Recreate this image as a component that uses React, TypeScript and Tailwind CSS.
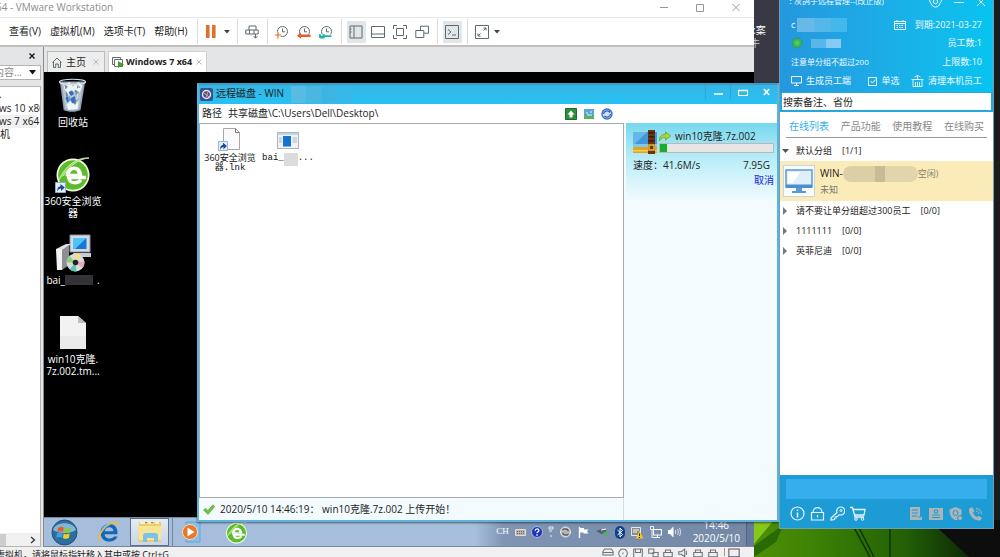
import type { ReactNode } from "react";

type Kids = { children: ReactNode };

function Svg({ w, h, box, label, children }: Kids & { w: number; h: number; box: string; label?: string }) {
  return (
    <svg width={w} height={h} viewBox={box} fill="none" className="shrink-0" aria-hidden={label ? undefined : true} aria-label={label}>
      {children}
    </svg>
  );
}

/* ---------- toolbar glyphs ---------- */

function Sep() {
  return (
    <span className="flex w-2 shrink-0 justify-center">
      <span className="h-[25px] w-px bg-[#dcdcdc]" />
    </span>
  );
}

function Caret() {
  return (
    <Svg w={6} h={4} box="0 0 6 4">
      <path d="M0 0h6L3 3.5z" fill="#444" />
    </Svg>
  );
}

function ToolButton({ label, active, children }: Kids & { label: string; active?: boolean }) {
  return (
    <button aria-label={label} className="flex w-[22px] shrink-0 items-center justify-center">
      <span className={active ? "flex h-[22px] w-[19px] items-center justify-center bg-[#e3e6e8]" : "flex items-center justify-center"}>
        {children}
      </span>
    </button>
  );
}

function Clock({ children }: { children?: ReactNode }) {
  return (
    <Svg w={14} h={14} box="0 0 14 14">
      <circle cx="7.5" cy="6.5" r="5" stroke="#5d6a70" />
      <path d="M7.5 3.5v3.3h2.6" stroke="#5d6a70" />
      {children}
    </Svg>
  );
}

function Toolbar() {
  return (
    <div className="flex items-center">
      <Sep />
      <button aria-label="暂停" className="flex w-5 justify-center">
        <Svg w={10} h={13} box="0 0 10 13">
          <path d="M0 0h3.6v13H0zM6 0h3.6v13H6z" fill="#e2702c" />
        </Svg>
      </button>
      <button aria-label="电源选项" className="flex w-3 justify-center"><Caret /></button>
      <Sep />
      <ToolButton label="发送 Ctrl+Alt+Del">
        <Svg w={14} h={14} box="0 0 14 14">
          <path d="M4 5V1h7v4M.8 5h12.4v4H.8zM4.500 5v4M9 5v4M10.500 9v4M8.500 11l2 2.200 2-2.200" stroke="#5d6a70" />
        </Svg>
      </ToolButton>
      <Sep />
      <ToolButton label="拍摄快照">
        <Clock>
          <path d="M0 10h6M3 7v6.500" stroke="#fff" strokeWidth="3" />
          <path d="M0 10h6M3 7v6.500" stroke="#e2702c" strokeWidth="1.200" />
        </Clock>
      </ToolButton>
      <ToolButton label="恢复快照">
        <Clock>
          <path d="M0 9.500h14V14H0z" fill="#fff" />
          <path d="M0 10.700 4 7.600v1.800h9.500v2.600H4v1.800z" fill="#e2602c" />
        </Clock>
      </ToolButton>
      <ToolButton label="管理快照">
        <Clock>
          <path d="M0 9.500h14V14H0z" fill="#fff" />
          <path d="M0 9.200h2.200v1.500h1.600V9.200h1.500l.8 1h6.400v1.900H6.100l-.9 1.400H1.400L0 12.400z" fill="#18b5a8" />
        </Clock>
      </ToolButton>
      <Sep />
      <ToolButton label="显示库" active>
        <Svg w={14} h={14} box="0 0 14 14"><path d="M1 1h12v12H1zM5 1v12M1 4h1.500M1 7h1.500" stroke="#5d6a70" /></Svg>
      </ToolButton>
      <ToolButton label="缩略图栏">
        <Svg w={14} h={14} box="0 0 14 14"><path d="M.5 1.500h13v11H.5zM.5 9h13" stroke="#5d6a70" /></Svg>
      </ToolButton>
      <ToolButton label="全屏">
        <Svg w={14} h={14} box="0 0 14 14"><path d="M4 .5H.5V4M10 .5h3.500V4M4 13.500H.5V10M10 13.500h3.500V10M3.500 3.500h7v7h-7z" stroke="#5d6a70" /></Svg>
      </ToolButton>
      <ToolButton label="Unity">
        <Svg w={14} h={14} box="0 0 14 14"><path d="M.8 5.500h8v7h-8zM5.500 5.500V1.200h8v7H8.800" stroke="#5d6a70" /></Svg>
      </ToolButton>
      <Sep />
      <ToolButton label="控制台视图" active>
        <Svg w={14} h={14} box="0 0 14 14"><path d="M.5.5h13v13H.5zM3 4.500l3 2.500-3 2.500M7 10h4" stroke="#5d6a70" /></Svg>
      </ToolButton>
      <Sep />
      <ToolButton label="拉伸客户机">
        <Svg w={14} h={14} box="0 0 14 14"><path d="M.5.5h13v13H.5zM8.500 5.500 11 3M8.500 3H11v2.500M5.500 8.500 3 11M3 8.500V11h2.500" stroke="#5d6a70" /></Svg>
      </ToolButton>
      <button aria-label="拉伸选项" className="flex w-2 justify-center"><Caret /></button>
    </div>
  );
}

/* ---------- shared pictures ---------- */

function GreenE({ size }: { size: number }) {
  return (
    <Svg w={size} h={size} box="0 0 36 36">
      <circle cx="18" cy="19" r="16.500" fill="#f4ffe8" />
      <circle cx="18" cy="19" r="14.800" fill="#5cba2b" />
      <path d="M31 21.500H13.500c.8 3.600 3.200 5.200 6.200 5.200 2.600 0 4.600-.9 6.300-2.700" stroke="#fff" strokeWidth="3.400" />
      <path d="M10.500 20c.4-6 3.800-9.500 8.600-9.500S27 13.800 27.400 20z" fill="#fff" />
      <path d="M15.200 17.800c.5-2.400 1.900-3.700 3.800-3.700s3.200 1.300 3.600 3.700z" fill="#5cba2b" />
      <path d="M4 24C10 10 22 1 34 2c-10 1-19 7-26 18" fill="#8fd94d" stroke="#e9ffd6" strokeWidth=".8" />
    </Svg>
  );
}

function ShortcutBadge({ size }: { size: number }) {
  return (
    <Svg w={size} h={size} box="0 0 11 11">
      <path d="M.5.500h10v10H.5z" fill="#e4edf9" stroke="#93abc9" />
      <path d="M2.500 9.500c-.5-3.500 1-5 3-5.200V2L9.800 5.400 6 9V6.600C4.500 6.600 3.300 7.500 2.500 9.500z" fill="#1a4a94" />
    </Svg>
  );
}

function RecycleBin() {
  return (
    <Svg w={30} h={36} box="0 0 32 36">
      <path d="M2 3.500 6 34c4 2.600 14 2.600 18 0l5-30.500z" fill="#8fa4b5" />
      <path d="M4 5l3.500 28c4 2 11 2 15 0L27 5z" fill="#b4c4d0" />
      <path d="M6 8l6-4 4 5 6-5 4 4-3 8-5-3-6 5-4-3zM9 28l5-4 4 5 4-6-1 10-10 1z" fill="#eef3f6" />
      <path d="M8 13l3 5-2 4zM18 12l5 3-4 3zM22 22l-3 6-4-2zM7 7l4 2-3 3zM21 7l3 3-4 1z" fill="#71899b" />
      <path d="M11 15l4-2 2 4-3 2zM8 21l4-2 1 5-3 2zM13 22l5-3 1 5-4 3z" fill="#2f6fc4" />
      <ellipse cx="15.500" cy="4" rx="14" ry="2.800" stroke="#d5e0e8" strokeWidth="1.200" />
      <path d="M10 8l3 25M22 8l-3 25" stroke="#fff" strokeOpacity=".5" />
    </Svg>
  );
}

function Installer() {
  return (
    <Svg w={36} h={38} box="0 0 36 38">
      <path d="M15 1h20v17H15z" fill="#d7d9e4" stroke="#8c8fa5" />
      <path d="M18 4h13.500v11H18z" fill="#1378d4" />
      <path d="M18 4h13.500L20 15h-2z" fill="#4fc3f5" />
      <path d="M18 19h18v4H20z" fill="#c7c9d3" />
      <path d="M1 15l10-5h5l-7 6z" fill="#dfe0e3" />
      <path d="M1 15h6v21H2z" fill="#f1f1f1" />
      <path d="M7 16l7-5v20l-7 5z" fill="#8d8f96" />
      <circle cx="20.500" cy="28.500" r="9" fill="#d8dcd8" />
      <path d="M20.500 28.500V19.500a9 9 0 0 1 6 2.300z" fill="#f3e27c" />
      <path d="M20.500 28.500l9-1a9 9 0 0 1-2 6.500z" fill="#e7a6b9" />
      <path d="M20.500 28.500l1 9a9 9 0 0 1-7-2z" fill="#58c7b4" />
      <path d="M20.500 28.500l-9 0a9 9 0 0 1 3-6.500z" fill="#8fcf7b" />
      <circle cx="20.500" cy="28.500" r="2.800" fill="#222" />
    </Svg>
  );
}

function PageIcon() {
  return (
    <Svg w={26} h={33} box="0 0 26 33">
      <path d="M0 0h18l8 7v26H0z" fill="#f2f2f2" />
      <path d="M18 0v7h8z" fill="#bdbdbd" />
      <path d="M0 20h26v13H0z" fill="#eaeaea" />
    </Svg>
  );
}

/* ---------- virtual machine window ---------- */

function DesktopIcon({ icon, badge, children }: Kids & { icon: ReactNode; badge?: boolean }) {
  return (
    <li className="flex h-[79px] flex-col items-center text-center text-[10px] leading-3 text-white">
      <span className="relative flex h-[38px] items-center">
        {icon}
        {badge && <span className="absolute bottom-0 left-0"><ShortcutBadge size={11} /></span>}
      </span>
      <span className="mt-[2px] whitespace-nowrap">{children}</span>
    </li>
  );
}

function Tray() {
  return (
    <div className="flex h-full items-center bg-gradient-to-r from-[#a6bedb] from-0% via-[#7f95b3] via-10% to-[#7488a6]">
      <span className="ml-5 font-['Liberation_Serif',serif] text-[9px] text-white">CH</span>
      <ul className="ml-1 flex items-center">
        <li className="flex w-4 justify-center">
          <Svg w={11} h={8} box="0 0 11 8"><path d="M.5 1.500h10v6H.5z" fill="#b9b2ac" stroke="#e2ddd8" /><path d="M2 3.500h7M2 5.500h7" stroke="#75695f" strokeDasharray="1 1" /></Svg>
        </li>
        <li className="flex w-4 justify-center">
          <Svg w={12} h={12} box="0 0 12 12"><circle cx="6" cy="6" r="5.500" fill="#1d35b4" stroke="#aab7ec" /><path d="M4.200 4.700c0-2.400 3.700-2.300 3.700-.2C7.900 5.700 6 5.800 6 7.200M6 8.300v1.500" stroke="#fff" strokeWidth="1.300" /></Svg>
        </li>
        <li className="flex w-3 justify-center">
          <Svg w={6} h={12} box="0 0 6 12"><path d="M1 1h4v2H1zM1 5h3M2 10h2" stroke="#e8edf4" /></Svg>
        </li>
        <li className="flex w-[18px] justify-center">
          <Svg w={11} h={12} box="0 0 11 12"><circle cx="5.500" cy="6" r="5" fill="#b5b5b5" stroke="#e8e8e8" /><path d="M2.500 4c2-2 5-1 6 1M8.500 8c-2 2-5 1-6-1" stroke="#5c5c5c" strokeWidth="1.400" /></Svg>
        </li>
        <li className="flex w-[18px] justify-center">
          <Svg w={11} h={11} box="0 0 11 11"><path d="M1.500 0v11" stroke="#fff" strokeWidth="1.400" /><path d="M2 1h4v1.500h4.500L9 4.500l1.500 2H5.500V5.500H2z" fill="#fff" /></Svg>
        </li>
        <li className="flex w-[18px] justify-center">
          <Svg w={12} h={10} box="0 0 12 10"><path d="M0 4l5-2 5 1v3l-5 1z" fill="#566270" /><path d="M5 3l5-1" stroke="#fff" /><path d="M7 5h4v4.500L9.500 8z" fill="#3fbf3f" /></Svg>
        </li>
        <li className="flex w-[18px] justify-center">
          <Svg w={10} h={13} box="0 0 10 13"><rect width="10" height="13" rx="5" fill="#0f3f8c" /><path d="M2.500 4l5 4.500L5 11V2l2.500 2.500-5 4.500" stroke="#fff" /></Svg>
        </li>
        <li className="flex w-[18px] justify-center">
          <Svg w={13} h={13} box="0 0 13 13"><path d="M.5 1.500h9v8h-9z" fill="#8c8c86" stroke="#e8e8e8" /><path d="M2 4h6M2 6h4" stroke="#fff" /><path d="M8.500 5l4 7.500h-8z" fill="#f4c622" /><path d="M8.500 7.500v2.500M8.500 11v1" stroke="#222" /></Svg>
        </li>
        <li className="flex w-[19px] justify-center">
          <Svg w={12} h={12} box="0 0 12 12"><path d="M3.500 3.500h8v5.500h-8zM7.500 9v2M5 11.500h5" stroke="#fff" strokeWidth="1.100" /><path d="M.5.500h3v3h-3zM2 4v7.500h3" stroke="#e8edf4" /></Svg>
        </li>
        <li className="flex w-[18px] justify-center">
          <Svg w={13} h={12} box="0 0 13 12"><path d="M0 4h2l3.500-3.500v11L2 8H0z" fill="#fff" /><path d="M7.500 4v4M9.500 3c1 2 1 4 0 6M11.500 2c1.300 2.500 1.300 5.500 0 8" stroke="#e3e8ef" strokeWidth=".9" /></Svg>
        </li>
      </ul>
      <div className="ml-[9px] mr-[6px] text-center text-[10px] leading-[13px] text-white">
        <div>14:46</div>
        <div>2020/5/10</div>
      </div>
      <span className="h-full w-2 border-l border-[#53657f] bg-[#65799a]" />
    </div>
  );
}

function Taskbar() {
  return (
    <div className="flex h-[30px] items-center border-y border-y-[#76869c] bg-[#a6bedb]">
      <button aria-label="开始" className="ml-[7px]">
        <Svg w={27} h={27} box="0 0 27 27">
          <circle cx="13.500" cy="13.500" r="12.500" fill="#2a6fa0" stroke="#23506f" />
          <path d="M2 11C4 2 23 2 25 11c-6 4-17 4-23 0z" fill="#7fb7d8" />
          <path d="M7 9c2-1.500 4-1.500 5.800-.5l-.8 4.500c-2-1-4-.8-5.800.3z" fill="#ea5a2a" />
          <path d="M13.800 8.800c2 1 4 1 6 0l-.8 4.700c-2 1-4 1-6-.2z" fill="#8ec63f" />
          <path d="M6 14.400c2-1.200 4-1.200 5.800-.2l-.8 4.500c-2-1-4-1-5.800.2z" fill="#3f9fe0" />
          <path d="M12.700 14.400c2 1 4 1.200 6 .2l-.8 4.500c-2 1-4 1-6-.2z" fill="#fbc926" />
        </Svg>
      </button>
      <button aria-label="Internet Explorer" className="ml-[19px]">
        <Svg w={23} h={22} box="0 0 23 22">
          <path d="M20.500 13.200H7.500c.5 3 2.200 4.300 5 4.300 2 0 3.500-.7 4.500-2h3.500c-1.300 3.300-4.200 5-8 5-5.500 0-9-3.500-9-8.800 0-5 3.700-8.700 9-8.700 5.400 0 8.500 3.800 8 10.200zm-4-3c-.3-2.500-1.800-4-4.200-4s-4.200 1.500-4.700 4z" fill="#1568b8" />
          <path d="M3 20C-1 17 6 5 16 1.500c4-1.300 5.500 0 4.500 2.500" stroke="#f2bd2c" strokeWidth="1.600" />
          <path d="M5 9c1.500-3 4-5 7-5.200" stroke="#7fc4f2" strokeWidth="1.200" />
        </Svg>
      </button>
      <button aria-label="文件资源管理器" className="ml-[10px] flex h-7 w-[39px] items-center justify-center border border-[#5f6f86] bg-gradient-to-b from-[#e4ebf4] to-[#c8d6e8]">
        <Svg w={26} h={24} box="0 0 26 24">
          <path d="M2 2h22v20H1z" fill="#e9cf6e" />
          <path d="M3 1h5v3H3zM11 1h3v3h-3zM18 1h4v3h-4z" fill="#f7f0c8" />
          <path d="M1 6h24l-1 14H2z" fill="#f6e596" />
          <path d="M6 22v-6q0-3 3-3h9q3 0 3 3v6h-4v-4h-7v4z" fill="#7cc1ea" />
          <path d="M9 2v1M15 2v1" stroke="#d2452d" strokeWidth="1.500" />
        </Svg>
      </button>
      <button aria-label="Windows Media Player" className="ml-[3px] flex h-7 w-[31px] items-center justify-center border-l border-[#76869c] pl-[6px]">
        <Svg w={20} h={22} box="0 0 20 22">
          <path d="M5 1h14v20H5z" fill="#86c0e8" stroke="#5ea8d8" />
          <circle cx="9" cy="11" r="7.500" fill="#e8782a" stroke="#f7d9bf" />
          <path d="M6.500 6.500v9l7-4.500z" fill="#fff" />
        </Svg>
      </button>
      <button aria-label="360安全浏览器" className="ml-[22px]"><GreenE size={23} /></button>
      <div className="ml-auto h-full"><Tray /></div>
    </div>
  );
}

function StatusIcons() {
  return (
    <div className="mr-[14px] flex items-start gap-[3px]">
      {["M1 8V4l2-3h8l2 3v4zM1 5h12", "M7 1a5 5 0 1 0 .1 0M7 5v2", "M2 1h10v10H2zM4 1v4h6V1", "M2 1h6v5H2zM7 5h6v5H7z", "M2 5h10v5H2zM4 5V2h6v3", "M2 4h3l4-3v9L5 7H2zM11 3v5", "M2 5h10v5H2zM4 2h6v3H4z", "M2 5h10v5H2zM4 2h6v3H4z"].map((d, i) => (
        <Svg key={i} w={12} h={9} box="0 0 14 10"><path d={d} stroke="#6b7378" strokeWidth="1.200" /></Svg>
      ))}
      <span className="ml-[2px] h-2 w-px bg-[#999]" />
      <Svg w={12} h={9} box="0 0 14 10"><path d="M1 1h12v9H1z" stroke="#556" strokeWidth="1.200" /></Svg>
    </div>
  );
}

function VmWindow() {
  return (
    <main className="flex h-full w-[75.4%] flex-col overflow-hidden bg-white">
      <header className="flex h-[18px] shrink-0 items-center border-b border-[#e8e8e8]">
        <h1 className="-ml-[4px] -mt-[3px] text-[10px] leading-4 text-[#8d8d8d]">64 - VMware Workstation</h1>
        <div className="-mt-[4px] ml-auto mr-[12px] flex gap-[24px] text-[#999]">
          <button aria-label="最小化"><Svg w={12} h={12} box="0 0 12 12"><path d="M2 6.500h8" stroke="currentColor" /></Svg></button>
          <button aria-label="最大化"><Svg w={12} h={12} box="0 0 12 12"><path d="M2.500 3.500h7v7h-7z" stroke="currentColor" /></Svg></button>
          <button aria-label="关闭"><Svg w={12} h={12} box="0 0 12 12"><path d="M2.500 3l7 7M9.500 3l-7 7" stroke="currentColor" /></Svg></button>
        </div>
      </header>

      <div className="flex h-[29px] shrink-0 items-center border-b-2 border-[#c3bfbd] text-[#222]">
        <nav className="mr-[6px] flex gap-[9px] whitespace-nowrap pl-[9px] text-[10px]">
          <button>查看(V)</button>
          <button>虚拟机(M)</button>
          <button>选项卡(T)</button>
          <button>帮助(H)</button>
        </nav>
        <Toolbar />
      </div>

      <div className="flex min-h-0 flex-1">
        <aside className="flex w-[44px] shrink-0 flex-col overflow-hidden border-r border-[#8b8b8b] bg-[#e4e5e7] pr-[2px]">
          <button aria-label="关闭库" className="mr-[6px] mt-[3px] flex h-[11px] items-center self-end">
            <Svg w={6} h={6} box="0 0 6 6"><path d="M.5.500l5 5M5.500.500l-5 5" stroke="#111" strokeWidth="1.200" /></Svg>
          </button>
          <button className="mt-[4px] flex h-[15px] items-center justify-between border border-l-0 border-[#b4b4b4] bg-white pr-1 text-[10px] text-[#8a8a8a]">
            <span className="-ml-[6px] whitespace-nowrap">内容...</span>
            <Svg w={7} h={5} box="0 0 7 5"><path d="M0 0h7L3.500 4.500z" fill="#111" /></Svg>
          </button>
          <div className="mt-[6px] flex min-h-0 flex-1 flex-col border border-l-0 border-[#b4b4b4] bg-white">
            <ul className="min-h-0 flex-1 overflow-hidden whitespace-nowrap pt-px text-[10px] leading-[13px] text-[#222]">
              <li className="-ml-px h-[14px]">.</li>
              <li className="-ml-px">ws 10 x86</li>
              <li className="-ml-px mr-1 bg-[#f0f0f0]">ws 7 x64</li>
              <li>机</li>
            </ul>
            <div className="flex h-[13px] items-center bg-[#f0f0f0]">
              <span className="h-3 w-[6px] bg-[#cdcdcd]" />
              <span className="ml-auto mr-[4px]"><Svg w={6} h={8} box="0 0 6 8"><path d="M1 1l3.500 3L1 7" stroke="#333" strokeWidth="1.300" /></Svg></span>
            </div>
          </div>
        </aside>

        <section className="flex min-w-0 flex-1 flex-col">
          <div className="flex h-[25px] shrink-0 items-end gap-[3px] bg-[#e4e5e7] pl-[3px] text-[10px] text-[#222]">
            <button className="flex h-[21px] w-[58px] items-center border border-b-0 border-[#bcbcbc] bg-[#ededee] pl-1">
              <Svg w={10} h={11} box="0 0 10 11"><path d="M.5 5.500 5 1l4.500 4.500M1.500 5v5.500h2.200V7h2.600v3.500h2.200V5" stroke="#5d6a70" /></Svg>
              <span className="ml-1">主页</span>
              <span className="ml-auto mr-[5px]"><Svg w={6} h={6} box="0 0 6 6"><path d="M.5.500l5 5M5.500.500l-5 5" stroke="#b9b9b9" /></Svg></span>
            </button>
            <button className="flex h-[21px] w-[99px] items-center border border-b-0 border-[#d0d0d0] bg-white pl-[3px] text-[9px] font-bold">
              <Svg w={12} h={11} box="0 0 12 11"><path d="M2.500 7.500h-2v-7h8v2M2.500 2.500h8v7h-8z" stroke="#5d6a70" /><path d="M6 4l6 3.500L6 11z" fill="#43a12a" /></Svg>
              <span className="ml-[2px] whitespace-nowrap">Windows 7 x64</span>
              <span className="ml-auto mr-[4px]"><Svg w={6} h={6} box="0 0 6 6"><path d="M.5.500l5 5M5.500.500l-5 5" stroke="#b9b9b9" /></Svg></span>
            </button>
          </div>
          <div className="min-h-0 flex-1 bg-black">
            <ul className="w-[58px] pt-1">
              <DesktopIcon icon={<RecycleBin />}>回收站</DesktopIcon>
              <DesktopIcon icon={<GreenE size={36} />} badge>360安全浏览<br />器</DesktopIcon>
              <DesktopIcon icon={<Installer />}>
                <span className="flex items-center">bai_<span className="h-[10px] w-7 bg-[#343236]" /><span className="ml-1">.</span></span>
              </DesktopIcon>
              <DesktopIcon icon={<PageIcon />}>win10克隆.<br />7z.002.tm...</DesktopIcon>
            </ul>
          </div>
          <Taskbar />
        </section>
      </div>

      <footer className="flex h-[10px] shrink-0 items-start overflow-hidden bg-[#f0f0f0] pt-px text-[9px] leading-[14px] text-[#222]">
        <span className="-ml-[4px] mr-auto whitespace-nowrap">虚拟机，请将鼠标指针移入其中或按 Ctrl+G</span>
        <StatusIcons />
      </footer>
    </main>
  );
}

/* ---------- remote disk window ---------- */

function RemoteDisk() {
  return (
    <section className="absolute bottom-[35px] left-[197px] right-[221px] top-[83px] flex flex-col border-2 border-[#5cb4de] border-t-[#3a9cc4] bg-[#f3fbfe] text-[10px] text-[#222] shadow-[0_1px_2px_#0008]">
      <header className="flex h-[19px] shrink-0 items-center bg-gradient-to-b from-[#35b5e6] to-[#25c2f2]">
        <span className="ml-px">
          <Svg w={13} h={13} box="0 0 13 13"><rect width="13" height="13" rx="2" fill="#3d4f86" /><circle cx="6.500" cy="6.500" r="4" stroke="#dfe6ee" strokeWidth="1.500" /><path d="M4 5l5 4M8 4l-2 5" stroke="#e7a9a0" /></Svg>
        </span>
        <h2 className="-mt-[3px] ml-[3px] whitespace-nowrap">远程磁盘 - WIN</h2>
        <span className="ml-[7px] flex h-[17px] w-[62px] shrink-0">
          <span className="flex-1 bg-[#58bbe3]" /><span className="flex-1 bg-[#49b7e2]" /><span className="flex-1 bg-[#3eb4e3]" /><span className="flex-1 bg-[#35b9e9]" />
        </span>
        <div className="ml-auto flex h-full items-stretch pb-[5px] text-white">
          <button aria-label="最小化" className="flex w-[25px] items-center justify-center border-l border-[#2fa6d2]"><Svg w={9} h={8} box="0 0 9 8"><path d="M0 6h9" stroke="currentColor" strokeWidth="1.500" /></Svg></button>
          <button aria-label="最大化" className="flex w-[25px] items-center justify-center border-l border-[#2fa6d2]"><Svg w={10} h={8} box="0 0 10 8"><path d="M.5 2.500h9v5h-9z" stroke="currentColor" /><path d="M0 2.500h10" stroke="currentColor" strokeWidth="1.500" /></Svg></button>
          <button aria-label="关闭" className="flex w-[22px] items-center justify-center"><Svg w={7} h={8} box="0 0 7 8"><path d="M.8 1l5.400 6M6.200 1 .8 7" stroke="currentColor" strokeWidth="1.600" /></Svg></button>
        </div>
      </header>

      <div className="flex h-[19px] shrink-0 items-center bg-white">
        <label htmlFor="path" className="ml-[3px] shrink-0">路径</label>
        <input id="path" defaultValue="共享磁盘\C:\Users\Dell\Desktop\" className="ml-[6px] min-w-0 flex-1 outline-none" />
        <div className="mr-[164px] flex shrink-0 gap-[6px]">
          <button aria-label="上一级"><Svg w={12} h={12} box="0 0 12 12"><path d="M.5.500h11v11H.5z" fill="#2f8f3c" stroke="#1d6a2a" /><path d="M6 2.500l3.500 4h-2v3h-3v-3h-2z" fill="#fff" /></Svg></button>
          <button aria-label="缩略图"><Svg w={12} h={12} box="0 0 12 12"><path d="M1 1h10v10H1z" fill="#5aa6dc" /><path d="M1 8l3-2 3 2 4-2v5H1z" fill="#58b06a" /><path d="M3 5h2M7 4h2M4 7h5" stroke="#e3f2fb" /></Svg></button>
          <button aria-label="刷新"><Svg w={12} h={12} box="0 0 12 12"><circle cx="6" cy="6" r="5" fill="#cfe2fa" stroke="#3c6fc4" strokeWidth="1.400" /><path d="M2.500 6a3.500 3.500 0 0 1 6-2v-1.500M9.500 6a3.500 3.500 0 0 1-6 2" stroke="#2d63be" strokeWidth="1.300" /></Svg></button>
        </div>
      </div>

      <div className="flex min-h-0 flex-1">
        <div className="flex min-w-0 flex-1 flex-col">
          <ul className="flex min-h-0 flex-1 border border-[#a9a9a9] bg-white pl-px pt-[4px] font-['Liberation_Mono','Noto_Sans_CJK_SC',monospace] text-[9px] leading-[10px] text-[#111]">
            <li className="flex w-[58px] flex-col items-center text-center">
              <span className="relative flex h-6 w-5 justify-end">
                <Svg w={17} h={22} box="0 0 17 22"><path d="M.5.500h12l4 4v17H.5z" fill="#fafafa" stroke="#a8a8a8" /><path d="M12.500.500v4h4" stroke="#777" /></Svg>
                <span className="absolute -left-[2px] bottom-px"><ShortcutBadge size={10} /></span>
              </span>
              <span className="mt-px whitespace-nowrap font-['Open_Sans','Noto_Sans_CJK_SC',sans-serif]">360安全浏览</span>
              <span>器.lnk</span>
            </li>
            <li className="flex w-[58px] flex-col items-center">
              <span className="flex h-6 items-center">
                <Svg w={22} h={17} box="0 0 22 17"><path d="M.5.500h21v16H.5z" fill="#f0f2f4" stroke="#a9b4bf" /><path d="M1 1h20v2H1z" fill="#c5d3e0" /><path d="M6 4h8v10.500H6z" fill="#1273d0" /><path d="M2 6h3M2 8h3M2 10h3M15.500 6h4.500M15.500 8h4.500M15.500 10h4.500" stroke="#b3bcc5" /></Svg>
              </span>
              <span className="mt-px flex whitespace-nowrap">bai_<span className="h-[13px] w-[14px] bg-[#dcdcdc]" />...</span>
            </li>
          </ul>
          <div className="flex h-[22px] shrink-0 items-center border-r border-[#dadada] pl-1">
            <Svg w={12} h={11} box="0 0 12 11"><path d="M.5 6l2.500-1.500L4.500 7 10 .8l1.700 1.700L5 10.500z" fill="#72c04a" stroke="#4f9a2c" strokeWidth=".6" /></Svg>
            <p className="ml-[5px]">2020/5/10 14:46:19： win10克隆.7z.002 上传开始！</p>
          </div>
        </div>

        <div className="ml-[2px] w-[151px] shrink-0 bg-gradient-to-b from-[#74d8ee] via-[#b9edf7] via-[9%] to-[#f3fbfe] to-[20%] pl-[7px] pr-[3px] pt-[6px]">
          <div className="flex gap-px">
            <Svg w={25} h={25} box="0 0 25 25">
              <path d="M0 3h24v21H0z" fill="#3f98d8" />
              <path d="M0 3h14L2 15H0z" fill="#67b6ea" />
              <path d="M0 15h24v4H0z" fill="#7cc9ee" />
              <path d="M0 18h24v6H0z" fill="#e2a51e" />
              <path d="M0 21h24v1.500H0z" fill="#f5cd50" />
              <path d="M15 1h7v24h-7z" fill="#6a3413" />
              <path d="M15.500 3h6v1.500h-6zM15.500 7h6v1.500h-6zM15.500 11h6v1.500h-6z" fill="#3a1b08" />
              <path d="M16 16h5v5h-5z" stroke="#f1b82c" strokeWidth="1.500" />
            </Svg>
            <div className="min-w-0 flex-1">
              <div className="flex h-[14px] items-center gap-1 whitespace-nowrap">
                <Svg w={12} h={11} box="0 0 12 11"><path d="M.5 10C0 5.500 2.500 3.500 6.500 3.400V.8L11.600 5 6.500 9V6.400C4 6.300 2 7.200.5 10z" fill="#a8d838" stroke="#6ba51b" strokeWidth=".8" /></Svg>
                win10克隆.7z.002
              </div>
              <div role="progressbar" aria-valuenow={6} className="h-[10px] border border-[#b9b9b9] bg-[#e6e6e6]">
                <div className="h-full w-[6%] bg-[#14b02c]" />
              </div>
            </div>
          </div>
          <div className="mt-1 flex justify-between pr-1 leading-[15px]"><span>速度：41.6M/s</span><span>7.95G</span></div>
          <a href="#cancel" className="block text-right leading-[15px] text-[#2222dd]">取消</a>
        </div>
      </div>
    </section>
  );
}

/* ---------- remote manager window ---------- */

function Group({ name, count }: { name: string; count: string }) {
  return (
    <li className="flex h-5 items-center whitespace-nowrap pl-[3px]">
      <Svg w={4} h={8} box="0 0 4 8"><path d="M0 0l4 4-4 4z" fill="#777" /></Svg>
      <span className="ml-[9px]">{name}</span>
      <span className="ml-[10px]">{count}</span>
    </li>
  );
}

function Manager() {
  return (
    <section className="absolute bottom-[28px] right-[6px] top-0 flex w-[215px] flex-col border border-t-0 border-[#6d9fb8] bg-white text-[9px] text-[#222]">
      <header className="flex h-[92px] shrink-0 flex-col overflow-hidden bg-gradient-to-r from-[#2597de] to-[#06c4f0] pl-[11px] pr-[11px] text-[#eefaff]">
        <div className="-mt-[7px] flex h-4 items-center whitespace-nowrap">
          <span className="-ml-[5px] w-2">⋮</span>
          <h2 className="text-[8px]">灰鸽子远程管理--(改正版)</h2>
          <div className="-mr-[4px] ml-auto flex gap-[12px]">
            <button aria-label="设置"><Svg w={13} h={14} box="0 0 13 14"><path d="M3 1.500h7L12.500 7 9.500 12 6.500 13.200 3.500 12 .5 7z" stroke="currentColor" /><circle cx="6.500" cy="7.500" r="2.200" stroke="currentColor" /></Svg></button>
            <button aria-label="最小化"><Svg w={10} h={14} box="0 0 10 14"><path d="M0 8.500h10" stroke="currentColor" /></Svg></button>
            <button aria-label="关闭"><Svg w={10} h={14} box="0 0 10 14"><path d="M1 4l8 8M9 4l-8 8" stroke="currentColor" /></Svg></button>
          </div>
        </div>
        <div className="mt-[6px] flex h-[19px] items-center">
          <span>c</span>
          <span className="ml-[2px] flex h-[14px] w-[50px]"><span className="flex-1 bg-[#68b8ea]" /><span className="flex-1 bg-[#55b7ea]" /><span className="flex-1 bg-[#43b8ea]" /></span>
          <span className="ml-auto mr-[9px]"><Svg w={12} h={10} box="0 0 12 10"><path d="M.5 1.500h11v8H.5zM.5 3.500h11M3 0v2M9 0v2" stroke="currentColor" /><path d="M2.500 5.500h7M2.500 7.500h7" stroke="currentColor" strokeDasharray="1.500 1" /></Svg></span>
          <span>到期:2021-03-27</span>
        </div>
        <div className="flex h-[18px] items-center">
          <Svg w={12} h={12} box="0 0 12 12"><circle cx="6" cy="6" r="5" fill="#39b36a" stroke="#2b9c62" /><circle cx="6" cy="6" r="2.500" fill="#56c75c" /></Svg>
          <span className="ml-2 flex h-[9px] w-[30px]"><span className="flex-1 bg-[#57b6ea]" /><span className="flex-1 bg-[#85cbf1]" /></span>
          <span className="ml-auto">员工数:1</span>
        </div>
        <div className="flex h-[19px] items-center justify-between"><span className="text-[8px]">注意单分组不超过200</span><span>上限数:10</span></div>
        <div className="flex h-[20px] items-center justify-between">
          <button className="flex items-center gap-[4px]">
            <Svg w={11} h={10} box="0 0 11 10"><path d="M.5.500h10v6.500H.5zM3 9.500h5M5.500 7v2" stroke="currentColor" /></Svg>生成员工端
          </button>
          <label className="ml-[6px] flex items-center gap-1">
            <input type="checkbox" defaultChecked className="peer sr-only" />
            <Svg w={9} h={9} box="0 0 9 9"><path d="M.5.500h8v8h-8zM2.500 4l2 2 3-3.500" stroke="currentColor" /></Svg>单选
          </label>
          <button className="flex items-center gap-[4px]">
            <Svg w={13} h={12} box="0 0 13 12"><path d="M.5 4.500h12M2 4.500v7h9v-7M4.500 7v4.500M6.500 7v4.500M8.500 7v4.500M6.500.500v4M3.500 2l3-1.500 3 1.500" stroke="currentColor" strokeWidth=".9" /></Svg>清理本机员工
          </button>
        </div>
      </header>

      <input aria-label="搜索" defaultValue="搜索备注、省份" className="h-5 w-full shrink-0 border-2 border-t border-[#25a9dd] bg-white pl-px text-[10px] outline-none" />

      <nav className="mx-[6px] mt-[3px] flex h-[23px] shrink-0 items-center justify-between border-b border-[#999] px-[3px] text-[10px] text-[#888]">
        <button className="text-[#2fb0ea]">在线列表</button>
        <button>产品功能</button>
        <button>使用教程</button>
        <button>在线购买</button>
      </nav>

      <ul className="min-h-0 flex-1 pt-[3px]">
        <li>
          <div className="flex h-5 items-center pl-[2px]">
            <Svg w={7} h={4} box="0 0 7 4"><path d="M0 0h7L3.500 4z" fill="#555" /></Svg>
            <span className="ml-[7px]">默认分组</span><span className="ml-[10px]">[1/1]</span>
          </div>
          <div className="flex h-10 items-center bg-[#fbebb8] pl-[3px]">
            <span className="flex h-8 w-8 items-center justify-center border border-[#c9d4da] bg-[#f8fbfe]">
              <Svg w={28} h={24} box="0 0 28 24"><path d="M1 1h26v17H1z" fill="#dff0fc" stroke="#5b9bd0" strokeWidth="1.500" /><path d="M1 15.500h26V19H1z" fill="#4a90cf" /><path d="M11 19h6v3h4v2H7v-2h4z" fill="#5b9bd0" /><path d="M3 3h12L8 14H3z" fill="#fff" /></Svg>
            </span>
            <div className="ml-[5px] leading-[15px]">
              <div className="flex items-center whitespace-nowrap">
                <span className="text-[10px]">WIN-</span>
                <span className="flex h-4 w-[75px] overflow-hidden rounded-lg"><span className="w-8 bg-[#dccfa6]" /><span className="w-[10px] bg-[#c9bb98]" /><span className="flex-1 bg-[#e3d5ab]" /></span>
                <span className="text-[#8a8570]">空闲)</span>
              </div>
              <div className="text-[#777]">未知</div>
            </div>
          </div>
        </li>
        <Group name="请不要让单分组超过300员工" count="[0/0]" />
        <Group name="1111111" count="[0/0]" />
        <Group name="英菲尼迪" count="[0/0]" />
      </ul>

      <footer className="flex h-[53px] shrink-0 flex-col bg-[#1d9bd4] px-[6px] pt-1">
        <div className="h-5 bg-[#36adec]" />
        <div className="flex flex-1 items-center justify-between px-1">
          <div className="flex gap-[5px] text-[#e6f7ff]">
            <button aria-label="信息"><Svg w={15} h={15} box="0 0 15 15"><circle cx="7.500" cy="7.500" r="6.500" stroke="currentColor" strokeWidth="1.200" /><path d="M7.500 6.500v5M7.500 3.500v1.500" stroke="currentColor" strokeWidth="1.500" /></Svg></button>
            <button aria-label="锁定"><Svg w={15} h={15} box="0 0 15 15"><path d="M1.500 6.500h12v7.500h-12zM3 6.500C3 0 12 0 12 6.500M7.500 9v2.500" stroke="currentColor" strokeWidth="1.200" /></Svg></button>
            <button aria-label="密码"><Svg w={15} h={15} box="0 0 15 15"><path d="M7 6.500a4 4 0 1 1 2.200 2.200L7.500 10.500H6V12H4.500v1.500L1 14v-2z" stroke="currentColor" strokeWidth="1.200" /><circle cx="11" cy="4.500" r="1" stroke="currentColor" /></Svg></button>
            <button aria-label="购物车"><Svg w={16} h={15} box="0 0 16 15"><path d="M0 1.500h2.500L5 11h9M3.500 3.500h11.500L14 9H5" stroke="currentColor" strokeWidth="1.300" /><circle cx="6" cy="13" r="1.300" stroke="currentColor" /><circle cx="12.500" cy="13" r="1.300" stroke="currentColor" /></Svg></button>
          </div>
          <div className="flex gap-[6px] text-[#abb5b8]">
            <button aria-label="日志"><Svg w={14} h={14} box="0 0 14 14"><path d="M1 0h10v9l2 1v3H1z" fill="currentColor" /><path d="M3 3h6M3 6h6M3 9h5M9 10h3" stroke="#1d9bd4" /></Svg></button>
            <button aria-label="名片"><Svg w={14} h={14} box="0 0 14 14"><path d="M0 1h14v12H0z" fill="currentColor" /><path d="M5.500 3h3v3h-3zM3 8h8M3 10.500h8" stroke="#1d9bd4" /></Svg></button>
            <button aria-label="安全"><Svg w={14} h={14} box="0 0 14 14"><path d="M6.500 0l6 2.500v5L9 13H6C2 11 .5 8 .5 2.500z" fill="currentColor" /><circle cx="6.500" cy="6" r="2.500" stroke="#1d9bd4" /><circle cx="11" cy="11" r="2.500" fill="currentColor" stroke="#1d9bd4" /></Svg></button>
            <button aria-label="联系客服"><Svg w={14} h={14} box="0 0 14 14"><path d="M0 2l3-2 2.500 4-1.500 1.500c.8 2.300 2 3.500 4 4.500l1.500-1.300L13 11l-1.500 2.500C5 14.500-.5 8 0 2z" fill="currentColor" /><path d="M7 1.500c3 0 5.500 2 5.500 5.500M7 4c1.800 0 3 1.200 3 3" stroke="currentColor" /></Svg></button>
          </div>
        </div>
      </footer>
    </section>
  );
}

/* ---------- desktop ---------- */

function Wallpaper() {
  return (
    <div className="flex min-w-0 flex-1 flex-col justify-between overflow-hidden bg-[#1b1b1d]">
      <div className="flex h-[84px] w-[26px] flex-col bg-[#383944] pt-[24px] text-[10px] leading-[13px] text-white">
        <span className="-ml-px">:案</span>
        <span className="-ml-[4px] text-[#c9c9cf]">牛</span>
      </div>
      <svg viewBox="0 0 246 37" preserveAspectRatio="none" className="h-[37px] w-full" aria-hidden>
        <defs>
          <linearGradient id="leaf" x1="0" y1="0" x2="1" y2="0">
            <stop offset="0" stopColor="#4f8f06" />
            <stop offset=".25" stopColor="#3f8405" />
            <stop offset=".7" stopColor="#236006" />
            <stop offset="1" stopColor="#0c2a05" />
          </linearGradient>
        </defs>
        <path d="M0 0h246v37H0z" fill="#0d0d0e" />
        <path d="M0 0h175l40 37H0z" fill="url(#leaf)" />
        <path d="M0 0h20L0 24z" fill="#84c81c" />
        <path d="M0 26l30-22-8 18L0 37z" fill="#2b6a03" />
        <path d="M96 0l20 37M101 0l19 37M136 0v37" stroke="#0f3204" strokeWidth="1.500" />
      </svg>
    </div>
  );
}

export default function App() {
  return (
    <div className="relative flex h-screen min-h-[400px] overflow-hidden font-['Open_Sans','Noto_Sans_CJK_SC',sans-serif]">
      <VmWindow />
      <Wallpaper />
      <RemoteDisk />
      <Manager />
    </div>
  );
}
